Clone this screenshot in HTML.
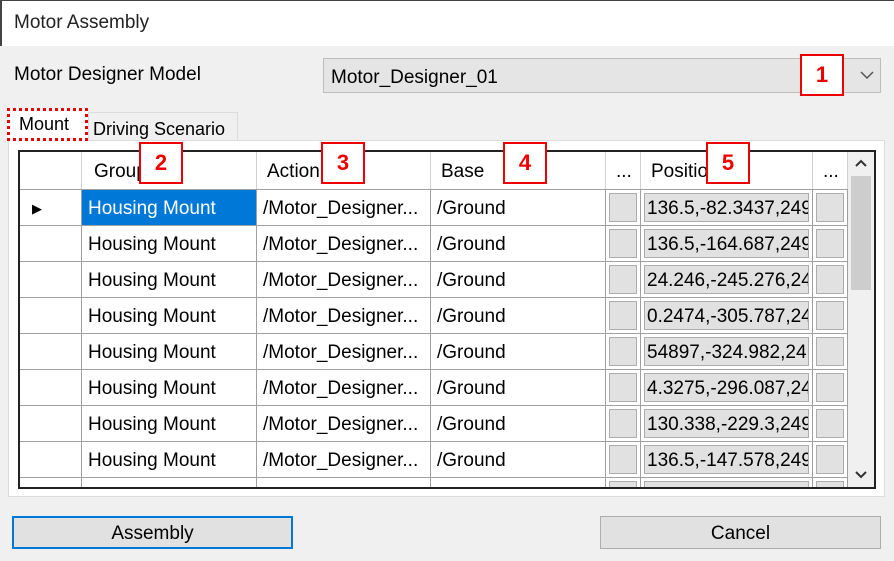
<!DOCTYPE html><html><head><style>
*{box-sizing:border-box}body{margin:0;width:894px;height:561px;overflow:hidden;background:#f0f0f0;font-family:"Liberation Sans",sans-serif;font-size:19px;color:#000;position:relative}
.a{position:absolute}
.red{position:absolute;border:2px solid #e00;background:#fff;color:#e00;font-weight:bold;font-size:22px;text-align:center;line-height:38px;width:44px;height:42px}
.row{position:absolute;left:20px;width:828px;height:36px;border-bottom:1px solid #a0a0a0;background:#fff;overflow:hidden}
.c{position:absolute;top:0;height:36px;line-height:37px;border-right:1px solid #a0a0a0;padding-left:6px;white-space:nowrap;overflow:hidden}
.btn{position:absolute;top:3px;height:29px;left:3px;right:3px;background:#e1e1e1;border:1px solid #adadad;overflow:hidden}
</style></head><body>
<div class="a" style="left:0;top:0;width:894px;height:46px;background:#fff;border-left:2px solid #444;border-top:1px solid #444"></div>
<div class="a" style="left:14px;top:12px;font-size:19px;color:#222">Motor Assembly</div>
<div class="a" style="left:14px;top:64px">Motor Designer Model</div>
<div class="a" style="left:323px;top:58px;width:558px;height:35px;background:#e5e5e5;border:1px solid #bdbdbd;padding-left:7px;line-height:37px">Motor_Designer_01</div>
<svg class="a" style="left:860px;top:70px" width="14" height="10"><path d="M1 2 L7 8 L13 2" stroke="#555" stroke-width="1.5" fill="none"/></svg>
<div class="red" style="left:800px;top:54px">1</div>
<div class="a" style="left:8px;top:140px;width:877px;height:357px;background:#fff;border:1px solid #dcdcdc"></div>
<div class="a" style="left:88px;top:112px;width:150px;height:29px;background:#f0f0f0;border:1px solid #dcdcdc;padding-left:4px;line-height:32px;font-size:18px">Driving Scenario</div>
<div class="a" style="left:7px;top:108px;width:81px;height:33px;background:#fff;border:3px dotted #e00;padding-left:9px;line-height:27px;font-size:18px">Mount</div>
<div class="a" style="left:18px;top:150px;width:858px;height:339px;border:2px solid #222;background:#fff;overflow:hidden">
<div class="row" style="left:0;top:0;height:38px;border-bottom:1px solid #a0a0a0">
<div class="c" style="left:0;width:62px;height:38px;line-height:40px;border-color:#d0d0d0"></div>
<div class="c" style="left:62px;width:175px;height:38px;line-height:40px;padding-left:12px;border-color:#d0d0d0">Group</div>
<div class="c" style="left:237px;width:174px;height:38px;line-height:40px;padding-left:10px;border-color:#d0d0d0">Action</div>
<div class="c" style="left:411px;width:175px;height:38px;line-height:40px;padding-left:10px;border-color:#d0d0d0">Base</div>
<div class="c" style="left:586px;width:35px;height:38px;line-height:40px;padding-left:10px;border-color:#d0d0d0">...</div>
<div class="c" style="left:621px;width:172px;height:38px;line-height:40px;padding-left:10px;border-color:#d0d0d0">Position</div>
<div class="c" style="left:793px;width:35px;height:38px;line-height:40px;padding-left:10px;border-color:#d0d0d0">...</div>
</div>
<div id="rows" style="position:absolute;left:-20px;top:-152px"></div>
<div class="a" style="left:828px;top:0;width:26px;height:335px;background:#f0f0f0"></div>
<div class="a" style="left:831px;top:24px;width:20px;height:114px;background:#cdcdcd"></div>
<svg class="a" style="left:834px;top:6px" width="14" height="10"><path d="M2 8 L7 3 L12 8" stroke="#333" stroke-width="2" fill="none"/></svg>
<svg class="a" style="left:834px;top:318px" width="14" height="10"><path d="M2 2 L7 7 L12 2" stroke="#333" stroke-width="2" fill="none"/></svg>
</div>
<div class="red" style="left:139px;top:142px">2</div>
<div class="red" style="left:321px;top:142px">3</div>
<div class="red" style="left:503px;top:142px">4</div>
<div class="red" style="left:706px;top:142px">5</div>
<div class="a" style="left:12px;top:516px;width:281px;height:33px;border:2px solid #0078d7;background:#e1e1e1;text-align:center;line-height:31px">Assembly</div>
<div class="a" style="left:600px;top:516px;width:281px;height:33px;border:1px solid #adadad;background:#e1e1e1;text-align:center;line-height:33px">Cancel</div>
<script>
var p=["136.5,-82.3437,249","136.5,-164.687,249","24.246,-245.276,24","0.2474,-305.787,24","54897,-324.982,24","4.3275,-296.087,24","130.338,-229.3,249","136.5,-147.578,249",""];
var h="";for(var i=0;i<9;i++){var t=190+i*36;
h+='<div class="row" style="top:'+t+'px">'+
'<div class="c" style="left:0;width:62px;padding-left:12px;font-size:13px">'+(i==0?'&#9654;':'')+'</div>'+
'<div class="c" style="left:62px;width:175px;'+(i==0?'background:#0078d7;color:#fff':'')+'">'+(i<8?'Housing Mount':'')+'</div>'+
'<div class="c" style="left:237px;width:174px">'+(i<8?'/Motor_Designer...':'')+'</div>'+
'<div class="c" style="left:411px;width:175px">'+(i<8?'/Ground':'')+'</div>'+
'<div class="c" style="left:586px;width:35px;padding:0"><div class="btn"></div></div>'+
'<div class="c" style="left:621px;width:172px;padding:0"><div class="btn" style="padding-left:2px;line-height:30px;white-space:nowrap">'+p[i]+'</div></div>'+
'<div class="c" style="left:793px;width:35px;padding:0"><div class="btn"></div></div></div>';}
document.getElementById('rows').innerHTML=h;
</script>
</body></html>
